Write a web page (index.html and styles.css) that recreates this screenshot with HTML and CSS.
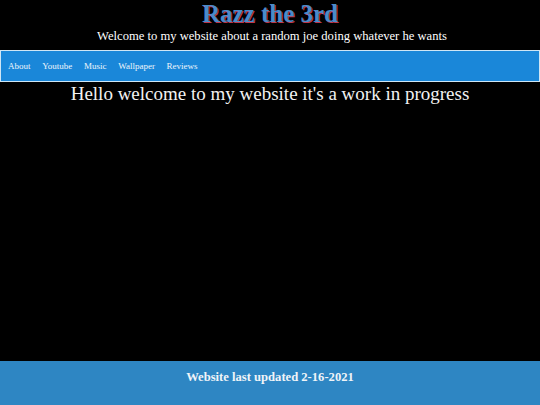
FILE: index.html
```html
<!DOCTYPE html>
<html>
<head>
<meta charset="utf-8">
<link rel="stylesheet" href="styles.css">
</head>
<body>
<div class="page">
  <header class="header">
    <h1 class="title">Razz the 3rd</h1>
    <p class="subtitle">Welcome to my website about a random joe doing whatever he wants</p>
  </header>
  <nav class="nav">
    <a class="nav-link" href="#">About</a>
    <a class="nav-link" href="#">Youtube</a>
    <a class="nav-link" href="#">Music</a>
    <a class="nav-link" href="#">Wallpaper</a>
    <a class="nav-link" href="#">Reviews</a>
  </nav>
  <main class="main">
    <h2 class="intro">Hello welcome to my website it's a work in progress</h2>
  </main>
  <footer class="footer">
    <p class="footer-text">Website last updated 2-16-2021</p>
  </footer>
</div>
</body>
</html>
```
FILE: styles.css
```css
html, body {
  margin: 0;
  padding: 0;
  background: #000;
  font-family: "Liberation Serif", "Times New Roman", serif;
  color: #fff;
}
.page {
  display: flex;
  flex-direction: column;
  min-height: 100vh;
}
.header {
  text-align: center;
}
.title {
  margin: 0;
  font-size: 25px;
  line-height: 28px;
  font-weight: bold;
  color: #4a8bc9;
  text-shadow: 1px 1px 0 #c0364a;
}
.subtitle {
  margin: 0;
  padding: 0 0 6px 4px;
  font-size: 12.6px;
  line-height: 16px;
}
.nav {
  display: flex;
  align-items: center;
  height: 30px;
  background: #1a87d9;
  border: 1px solid #cfe6f5;
  padding: 0 0 0 7px;
}
.nav-link {
  color: #eef5fb;
  text-decoration: none;
  font-size: 9px;
  margin-right: 11.7px;
}
.main {
  flex: 1;
  text-align: center;
}
.intro {
  margin: 0;
  font-size: 19px;
  font-weight: normal;
  line-height: 24px;
  color: #f2f2f2;
}
.footer {
  background: #2e86c3;
  height: 44px;
  text-align: center;
}
.footer-text {
  margin: 0;
  padding-top: 9px;
  font-size: 12.6px;
  font-weight: bold;
  line-height: 15px;
  color: #f0f4f8;
}
```
